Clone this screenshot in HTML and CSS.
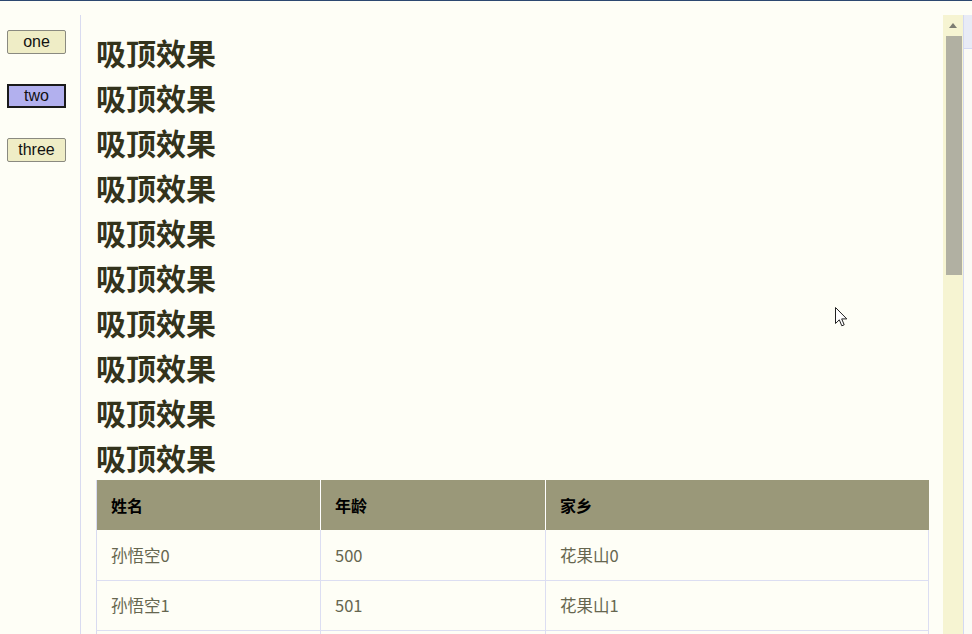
FILE: index.html
```html
<!DOCTYPE html>
<html lang="zh">
<head>
<meta charset="utf-8">
<title>吸顶效果</title>
<link rel="stylesheet" href="styles.css">
</head>
<body>
<div class="topline"></div>
<div class="page">
  <aside class="sidebar">
    <button class="btn">one</button>
    <button class="btn active">two</button>
    <button class="btn">three</button>
  </aside>
  <main class="main">
    <h2 class="title">吸顶效果</h2>
    <h2 class="title">吸顶效果</h2>
    <h2 class="title">吸顶效果</h2>
    <h2 class="title">吸顶效果</h2>
    <h2 class="title">吸顶效果</h2>
    <h2 class="title">吸顶效果</h2>
    <h2 class="title">吸顶效果</h2>
    <h2 class="title">吸顶效果</h2>
    <h2 class="title">吸顶效果</h2>
    <h2 class="title">吸顶效果</h2>
    <table class="grid">
      <colgroup><col class="c1"><col class="c2"><col class="c3"></colgroup>
      <thead>
        <tr><th>姓名</th><th>年龄</th><th>家乡</th></tr>
      </thead>
      <tbody>
        <tr><td>孙悟空0</td><td>500</td><td>花果山0</td></tr>
        <tr><td>孙悟空1</td><td>501</td><td>花果山1</td></tr>
        <tr class="spacer"><td></td><td></td><td></td></tr>
      </tbody>
    </table>
  </main>
  <div class="scrollbar">
    <div class="sb-arrow"><span class="tri"></span></div>
    <div class="sb-thumb"></div>
  </div>
  <div class="edge">
    <div class="edge-top"></div>
  </div>
</div>
<svg class="cursor" width="13" height="21" viewBox="0 0 13 21" xmlns="http://www.w3.org/2000/svg">
  <path d="M0.5 0.5 L0.5 16.5 L4.3 12.8 L6.8 18.8 L9.2 17.8 L6.7 11.9 L11.8 11.9 Z" fill="#ffffff" stroke="#222222" stroke-width="1" stroke-linejoin="miter"/>
</svg>
</body>
</html>
```
FILE: styles.css
```css
html, body {
  margin: 0;
  padding: 0;
  height: 100%;
  overflow: hidden;
}
body {
  background: #fefef6;
  font-family: "Noto Sans CJK SC", "Liberation Sans", sans-serif;
  position: relative;
}
.topline {
  height: 1px;
  background: #2c4870;
}
.page {
  margin-top: 14px;
  display: flex;
  height: 619px;
}
.sidebar {
  width: 81px;
  flex: none;
  border-right: 1px solid #d9dbf0;
  padding: 15px 0 0 7px;
  box-sizing: border-box;
  display: flex;
  flex-direction: column;
  gap: 30px;
}
.btn {
  width: 59px;
  height: 24px;
  box-sizing: border-box;
  padding: 0;
  font-family: "Liberation Sans", Arial, sans-serif;
  font-size: 16px;
  color: #111;
  background: #efedc6;
  border: 1px solid #8a8a80;
  border-radius: 2px;
}
.btn.active {
  background: #b2b0ee;
  border: 2px solid #1a1a1a;
  border-radius: 0;
}
.main {
  flex: 1;
  min-width: 0;
  overflow: hidden;
  padding: 15px 15px 0 15px;
}
.title {
  margin: 0;
  font-size: 30px;
  line-height: 45px;
  font-weight: 700;
  color: #33331c;
}
.grid {
  width: 832px;
  border-collapse: collapse;
  table-layout: fixed;
  font-size: 16px;
  border-left: 1px solid #d9dbf0;
}
.c1 { width: 224px; }
.c2 { width: 225px; }
.c3 { width: 383px; }
.grid th {
  height: 50px;
  box-sizing: border-box;
  background: #9a9879;
  color: #000;
  font-weight: 700;
  text-align: left;
  padding: 0 14px;
  border-right: 1px solid #ffffff;
}
.grid th:last-child { border-right: none; }
.grid td {
  height: 50px;
  box-sizing: border-box;
  padding: 0 14px;
  font-size: 16.5px;
  color: #66664f;
  border-right: 1px solid #dcdef2;
  border-bottom: 1px solid #dcdef2;
}
.scrollbar {
  width: 20px;
  flex: none;
  background: #f6f4d2;
  display: flex;
  flex-direction: column;
  align-items: center;
}
.sb-arrow {
  height: 21px;
  width: 100%;
  display: flex;
  justify-content: center;
  align-items: center;
}
.tri {
  width: 0;
  height: 0;
  border-left: 4px solid transparent;
  border-right: 4px solid transparent;
  border-bottom: 5px solid #7d7d72;
}
.sb-thumb {
  width: 16px;
  height: 239px;
  margin-left: 2px;
  background: #b1b0a2;
}
.edge {
  width: 8px;
  flex: none;
  border-left: 1px solid #d4d9f2;
  background: #fbfbf6;
}
.edge-top {
  height: 33px;
  background: #e8ebf6;
  border-bottom: 1px solid #d4d9f2;
}
.cursor {
  position: absolute;
  left: 835px;
  top: 307px;
}
```
